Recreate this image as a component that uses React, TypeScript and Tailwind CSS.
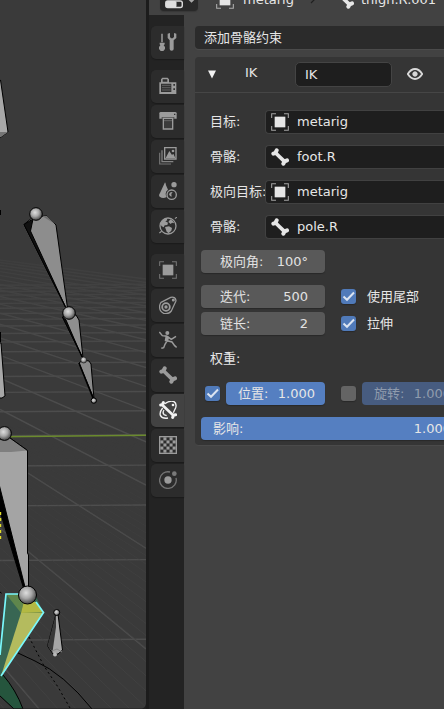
import React from "react";

type IconProps = { box?: string; className?: string; children?: React.ReactNode };

function Icon({ box = "0 0 54 54", className = "text-[#9b9b9b]", children }: IconProps) {
  return (
    <svg viewBox={box} className={`h-[18px] w-[18px] shrink-0 ${className}`} fill="none" stroke="currentColor">
      {children}
    </svg>
  );
}

function ObjectIcon({ className }: { className?: string }) {
  return (
    <Icon className={className}>
      <rect x="11" y="11" width="32" height="32" fill="currentColor" stroke="none" />
      <path d="M2 15V2h13M39 2h13v13M52 39v13H39M15 52H2V39" strokeWidth="3.2" opacity="0.65" />
    </Icon>
  );
}

function BoneIcon({ className }: { className?: string }) {
  return (
    <Icon className={className}>
      <path d="M14 15L40 40" strokeWidth="11" />
      <path d="M7 17L13 15L17 7M37 47L41 40L48 37" strokeWidth="12" strokeLinecap="round" strokeLinejoin="round" />
    </Icon>
  );
}

function ToolsIcon() {
  return (
    <Icon box="38 99 54 54">
      <path d="M47 101V127" strokeWidth="4.5" />
      <path d="M40 128h15v5l-3 3 4 5v6l-5 6h-8l-5-6v-6l4-5-2-3z" fill="currentColor" stroke="none" />
      <path d="M64 101v13l6 7v26q0 5 6 5t6-5v-26l8-7v-13l-7-2v12l-4 4h-5l-3-4v-12z" fill="currentColor" stroke="none" />
    </Icon>
  );
}

function RenderIcon() {
  return (
    <Icon box="38 231 54 54">
      <path d="M39 247h5v-9l4-5h16l4 5v9h22v35H39z" fill="currentColor" stroke="none" />
      <path d="M49 238h14v7H49zM44 251h31v25H44z" fill="#303030" stroke="none" />
      <path d="M47 256h26M47 263h26M47 270h26" strokeWidth="3" opacity="0.45" />
      <path d="M81 252h5v5h-5zM81 265h5v5h-5z" fill="#303030" stroke="none" />
    </Icon>
  );
}

function OutputIcon() {
  return (
    <Icon box="38 338 54 54">
      <path d="M39 342q0-4 4-4h43q5 0 5 4v16H39z" fill="currentColor" stroke="none" />
      <path d="M83 343h4v4h-4z" fill="#303030" stroke="none" />
      <path d="M46 354h38v4H46z" fill="#303030" stroke="none" />
      <path d="M51 357h28v32H51z" fill="#3b3b3b" strokeWidth="4" />
      <path d="M53 364h24" stroke="#666" strokeWidth="3" />
    </Icon>
  );
}

function ViewLayerIcon() {
  return (
    <Icon box="38 52 54 54">
      <path d="M55 54h34v34H55z" strokeWidth="4" />
      <path d="M58 85l11-21 8 12 4-4 6 13z" fill="currentColor" stroke="none" />
      <circle cx="80" cy="64" r="4" fill="currentColor" stroke="none" />
      <path d="M47 62v34h34" strokeWidth="3.8" opacity="0.8" />
      <path d="M40 69v34h34" strokeWidth="3.5" opacity="0.65" />
    </Icon>
  );
}

function SceneIcon() {
  return (
    <Icon box="38 157 54 54">
      <path d="M56 158q2 2 3 9l6 13q-7 5-7 12 0 6 3 10-11 7-21-1-4-4 1-11z" fill="currentColor" stroke="none" />
      <circle cx="83" cy="165" r="8" fill="currentColor" stroke="none" />
      <circle cx="76" cy="195" r="14" strokeWidth="4" />
      <path d="M68 194q2-8 11-7l-4 6 1 8q-6 0-8-7z" fill="currentColor" stroke="none" />
    </Icon>
  );
}

function WorldIcon() {
  return (
    <Icon box="38 262 54 54">
      <circle cx="65" cy="289" r="24" strokeWidth="3.8" />
      <path d="M43 280q6-12 18-14l2 6-6 3 8 4-2 7-8 1-3 6-7-4zM56 292l12-2 9 5-2 8-8 8-6-5zM72 269l7 4 5 8-7-2-4 4-7-6z" fill="currentColor" stroke="none" />
      <path d="M39 310l7-5M86 267l6-5" strokeWidth="3.5" />
    </Icon>
  );
}

function ModifierIcon() {
  return (
    <Icon box="38 139 54 54">
      <path d="M44 158L73 143q14-3 16 9 0 4-3 8L75 184q-9 11-23 7-14-6-12-23 1-6 4-10z" strokeWidth="3.8" />
      <circle cx="59" cy="172" r="11.5" strokeWidth="5.5" />
      <circle cx="59" cy="172" r="5" fill="currentColor" stroke="none" />
      <circle cx="81" cy="151" r="4.5" fill="currentColor" stroke="none" />
    </Icon>
  );
}

function RunnerIcon() {
  return (
    <Icon box="38 244 54 54">
      <circle cx="63" cy="250" r="6" fill="currentColor" stroke="none" />
      <path d="M39 247l9 11 14 2 13 9 14-9M61 276l-5 8-4 10-7 2M63 273l14 4 8 11 6 5" strokeWidth="4.5" />
      <path d="M58 257l11 6-5 14-9-3z" fill="currentColor" stroke="none" />
    </Icon>
  );
}

function BoneConstraintIcon() {
  return (
    <Icon box="38 124 54 54" className="text-[#f2f2f2]">
      <path d="M54 133q17-12 29-7 9 6 5 18l-7 15M49 145q-10 12-7 22 6 11 23 8" strokeWidth="4" />
      <circle cx="80" cy="136" r="4" fill="currentColor" stroke="none" />
      <path d="M53 151q-6 8 0 14l8 3" strokeWidth="3.5" />
      <path d="M48 136L82 168" strokeWidth="8" />
      <path d="M43 136l5-1 3-6M79 173l3-7 6-1" strokeWidth="9" strokeLinecap="round" />
    </Icon>
  );
}

const checkerCells = [0, 1, 2, 3, 4].flatMap((r) => [0, 1, 2, 3, 4].map((c) => [r, c])).filter(([r, c]) => (r + c) % 2 === 1);

function TextureIcon() {
  return (
    <Icon>
      <rect x="2" y="2" width="50" height="50" strokeWidth="4" />
      {checkerCells.map(([r, c]) => (
        <rect key={`${r}${c}`} x={4 + c * 9.2} y={4 + r * 9.2} width="9.2" height="9.2" fill="currentColor" stroke="none" />
      ))}
    </Icon>
  );
}

function PhysicsIcon() {
  return (
    <Icon box="38 334 54 54">
      <circle cx="65" cy="361" r="11" fill="currentColor" stroke="none" />
      <circle cx="84" cy="342" r="7" fill="currentColor" stroke="none" opacity="0.7" />
      <path d="M71 337A25 25 0 1 0 89 355" strokeWidth="4" opacity="0.65" />
    </Icon>
  );
}

function Tab({ active, children }: { active?: boolean; children: React.ReactNode }) {
  return (
    <div className={`flex h-[33px] items-center rounded-l-[5px] pb-px pl-[8px] shadow-[0_1px_1px_#1b1b1b] ${active ? "bg-[#424242]" : "bg-[#2c2c2c]"}`}>
      {children}
    </div>
  );
}

const depthLines = Array.from({ length: 22 }, (_, n) => 210 + 1 / (0.00233 + 0.00053 * n));
const raySlopes = Array.from({ length: 20 }, (_, n) => 1 / (0.85 + 0.36 * n));
const fineRays = Array.from({ length: 50 }, (_, n) => 1 / (0.6 + 0.036 * n));

function Viewport() {
  return (
    <svg viewBox="0 0 146 709" className="block h-[709px] w-[146px]">
      <defs>
        <linearGradient id="gridFade" x1="0" y1="0" x2="0" y2="709" gradientUnits="userSpaceOnUse">
          <stop offset="0.33" stopColor="#fff" stopOpacity="0" />
          <stop offset="0.46" stopColor="#fff" stopOpacity="0.7" />
          <stop offset="0.6" stopColor="#fff" stopOpacity="1" />
        </linearGradient>
        <linearGradient id="fineFade" x1="0" y1="0" x2="0" y2="709" gradientUnits="userSpaceOnUse">
          <stop offset="0.6" stopColor="#fff" stopOpacity="0" />
          <stop offset="0.9" stopColor="#fff" stopOpacity="1" />
        </linearGradient>
        <mask id="gridMask" maskUnits="userSpaceOnUse" x="0" y="0" width="146" height="709">
          <rect width="146" height="709" fill="url(#gridFade)" />
        </mask>
        <mask id="fineMask" maskUnits="userSpaceOnUse" x="0" y="0" width="146" height="709">
          <rect width="146" height="709" fill="url(#fineFade)" />
        </mask>
        <radialGradient id="ball" cx="0.42" cy="0.38" r="0.62">
          <stop offset="0" stopColor="#dedede" />
          <stop offset="0.5" stopColor="#a8a8a8" />
          <stop offset="1" stopColor="#484848" />
        </radialGradient>
      </defs>
      <rect width="146" height="709" fill="#3a3a3a" />
      <g mask="url(#gridMask)" stroke="#4e4e4e" strokeWidth="1.4">
        {depthLines.map((y) => (
          <line key={y} x1="0" y1={y + 0.9} x2="146" y2={y} />
        ))}
        {raySlopes.map((s) => (
          <line key={s} x1="0" y1={210 + 385 * s} x2="146" y2={210 + 531 * s} />
        ))}
      </g>
      <g mask="url(#fineMask)" stroke="#424242" strokeWidth="0.8">
        {fineRays.map((s) => (
          <line key={s} x1="0" y1={210 + 385 * s} x2="146" y2={210 + 531 * s} />
        ))}
      </g>
      <path d="M0 436.7L146 435.3" stroke="#6b8b2d" strokeWidth="1.4" />

      <g stroke="#000" strokeWidth="1" strokeLinejoin="round">
        <path d="M-2 78L0.5 80L8 132L1 137H-2z" fill="#a8a8a8" />
        <path d="M-1 132H8L1 137H-1z" fill="#747474" stroke="none" />
        <path d="M0 210v5M0 332v10" strokeWidth="2" />
        <path d="M-1 343H1L5 396L2 398H-1z" fill="#a8a8a8" />

        <path d="M24 224.5L33 217L47 216L56 225L67.5 308L65.5 307z" fill="#8d8d8d" />
        <path d="M24 224.5L33 219L30.5 231L65.5 307z" fill="#111" />
        <path d="M42 216H47L55 224z" fill="#707070" stroke="none" />
        <circle cx="36" cy="214" r="6.3" fill="url(#ball)" />
        <path d="M62.5 317L68 315L76 315L79 320L83 358z" fill="#8f8f8f" />
        <path d="M62.5 317L66 320L82 357z" fill="#111" />
        <circle cx="69" cy="313" r="6.3" fill="url(#ball)" />
        <path d="M79 363L83 360L89 361L91 364L94 399z" fill="#8b8b8b" />
        <path d="M79 363L93 398" strokeWidth="1.6" />
        <circle cx="83.7" cy="360" r="3" fill="url(#ball)" stroke="#222" strokeWidth="0.7" />
        <circle cx="93.8" cy="400.6" r="2.7" fill="url(#ball)" />

        <path d="M-1 440L10 438L27.5 450.5V553L28.5 555V592L25 591L-1 488z" fill="#a4a4a4" />
        <path d="M-1 440L10 438L27.5 450.5L11 452H-1z" fill="#7f7f7f" stroke="none" />
        <path d="M10 438L27.5 450.5" fill="none" />
        <path d="M-1 484L26 591L23.5 588L-1 508z" fill="#000" />
        <circle cx="4.5" cy="433.5" r="6.9" fill="url(#ball)" />
      </g>
      <path d="M0.5 512V540" stroke="#e3df28" strokeWidth="1.4" strokeDasharray="3 3" />

      <path d="M0 592L4 595M29 637L44 666L58 687L70 708" fill="none" stroke="#000" strokeDasharray="2 3" />
      <path d="M18 653L35 661Q64 674 92 709" fill="none" stroke="#000" />
      <path d="M-1 674L3 675Q16 690 23 709H14L-1 695z" fill="#25553d" stroke="#000" />
      <path d="M-1 655L6 594H35L43.5 613L1 676L-1 674z" fill="#386653" />
      <path d="M6 594H28L24 601L21 613z" fill="#5f864c" />
      <path d="M24 601L36 602L43.5 612.5L21 613z" fill="#b3b943" />
      <path d="M21 613H43.5L1 676z" fill="#b4bb5e" />
      <path d="M0 655L6 594H21M36 602L43.5 612.5L1 676" fill="none" stroke="#79f7fb" strokeWidth="1.7" />
      <circle cx="27.5" cy="595" r="9" fill="url(#ball)" stroke="#000" />
      <path d="M56 614L47.5 646L53 654H58L62.5 650L58 614z" fill="#a7a7a7" stroke="#000" />
      <path d="M56 614L47.5 646L52.5 652L56 627z" fill="#393939" />
      <path d="M52 651L57 649L62 652" fill="none" stroke="#888" />
      <circle cx="55" cy="654.5" r="2" fill="#b9b9b9" />
      <circle cx="56.7" cy="612.5" r="3" fill="url(#ball)" stroke="#000" />
      <path d="M0 708.5H142Q145 708 146 704V709H0z" fill="#202020" />
    </svg>
  );
}

function Field({ label, icon, value }: { label: string; icon: React.ReactNode; value: string }) {
  return (
    <div className="flex h-[24px]">
      <div className="w-[70px] shrink-0 whitespace-nowrap pl-[15px] leading-[23px]">{label}</div>
      <div className="flex h-full flex-1 items-center rounded-l-[4px] border border-r-0 border-[#414141] bg-[#1e1e1e] pb-px pl-[5px] leading-[22px]">
        {icon}
        <span className="pl-[8px]">{value}</span>
      </div>
    </div>
  );
}

function NumberField({ label, value }: { label: string; value: string }) {
  return (
    <div className="flex h-[23px] w-[124px] justify-between rounded-[4px] bg-[#595959] pl-[19px] pr-[17px] leading-[23px] text-[#e2e2e2] shadow-[0_1px_1px_#292929]">
      <span>{label}</span>
      <span>{value}</span>
    </div>
  );
}

function Check({ on = true }: { on?: boolean }) {
  return (
    <div className={`h-[15px] w-[15px] shrink-0 rounded-[3px] shadow-[0_1px_1px_#282828] ${on ? "bg-[#507ab9]" : "bg-[#646464]"}`}>
      {on && (
        <svg viewBox="0 0 15 15" className="block h-[15px] w-[15px]" fill="none" stroke="#dbe4f1" strokeWidth="2">
          <path d="M2.5 7.5L6 10.8L13 3.5" />
        </svg>
      )}
    </div>
  );
}

export default function App() {
  return (
    <div className="flex h-[709px] w-[444px] overflow-hidden bg-[#1c1c1c] font-['DejaVu_Sans','Noto_Sans_CJK_SC',sans-serif] text-[13px] text-[#e6e6e6]">
      <div className="w-[146px] shrink-0">
        <Viewport />
      </div>
      <div className="ml-[3px] flex w-[295px] shrink-0 flex-col overflow-hidden bg-[#424242]">
        <header className="h-[15px] shrink-0 overflow-hidden">
          <div className="-mt-[12px] flex h-[23px] items-center pl-[11px] leading-[23px]">
            <div className="flex h-[23px] w-[38px] shrink-0 items-end gap-[5px] rounded-[4px] bg-[#292929] pb-[2px] pl-[5px] shadow-[0_1px_1px_#383838]">
              <svg viewBox="0 0 18 14" className="h-[14px] w-[18px]">
                <rect x="0.8" y="6" width="16.5" height="6.5" rx="2" fill="#292929" stroke="#d8d8d8" strokeWidth="1.5" />
                <rect x="1" y="6" width="10.5" height="6.5" rx="1.5" fill="#dedede" />
              </svg>
              <svg viewBox="0 0 7 12" className="h-[12px] w-[7px]" fill="none" stroke="#aaa" strokeWidth="1.8">
                <path d="M0.5 1.5L3.5 4.5L6.5 1.5" />
              </svg>
            </div>
            <div className="ml-[18px] flex w-[77px] shrink-0 items-center gap-[9px]">
              <ObjectIcon className="text-[#e6e6e6]" />
              <span>metarig</span>
            </div>
            <svg viewBox="0 0 6 12" className="ml-[17px] h-[12px] w-[6px] shrink-0" fill="none" stroke="#202020" strokeWidth="1.2">
              <path d="M1 1L5 5L1 9" />
            </svg>
            <div className="ml-[20px] flex items-center gap-[7px]">
              <BoneIcon className="text-[#e6e6e6]" />
              <span>thigh.R.001</span>
            </div>
          </div>
        </header>
        <div className="flex flex-1">
          <nav className="flex w-[35px] shrink-0 flex-col gap-[2px] bg-[#232323] pl-[2px] pt-[11px]">
            <Tab><ToolsIcon /></Tab>
            <div className="h-[7px]" />
            <Tab><RenderIcon /></Tab>
            <Tab><OutputIcon /></Tab>
            <Tab><ViewLayerIcon /></Tab>
            <Tab><SceneIcon /></Tab>
            <Tab><WorldIcon /></Tab>
            <div className="h-[7px]" />
            <Tab><ObjectIcon className="text-[#9b9b9b]" /></Tab>
            <Tab><ModifierIcon /></Tab>
            <Tab><RunnerIcon /></Tab>
            <Tab><BoneIcon className="text-[#9b9b9b]" /></Tab>
            <Tab active><BoneConstraintIcon /></Tab>
            <Tab><TextureIcon /></Tab>
            <Tab><PhysicsIcon /></Tab>
          </nav>
          <main className="flex-1 pl-[11px] pt-[11px]">
            <div className="h-[23px] rounded-l-[4px] bg-[#2b2b2b] pl-[9px] leading-[23px] shadow-[0_1px_1px_#4d4d4d]">添加骨骼约束</div>
            <section className="mt-[8px] h-[389px] rounded-l-[4px] border-b border-[#4a4a4a] bg-[#353535]">
              <div className="flex h-[36px] items-center border-b border-[#464646]">
                <svg viewBox="0 0 8 9" className="ml-[13px] h-[9px] w-[8px]">
                  <path d="M0 0.5H8L4 8.5z" fill="#f2f2f2" />
                </svg>
                <span className="ml-[29px] w-[50px] pb-[4px] leading-[23px]">IK</span>
                <div className="h-[25px] w-[97px] rounded-[5px] border border-[#444] bg-[#1e1e1e] pl-[9px] leading-[23px]">IK</div>
                <svg viewBox="0 0 16 12" className="mb-px ml-[15px] h-[12px] w-[16px]" fill="none" stroke="#d9d9d9">
                  <path d="M0.8 6Q4 1 8 1T15.2 6Q12 11 8 11T0.8 6z" strokeWidth="1.9" />
                  <circle cx="8" cy="6" r="2.2" fill="#d9d9d9" strokeWidth="1" />
                </svg>
              </div>
              <div className="flex flex-col gap-[11px] pt-[17px]">
                <Field label="目标:" icon={<ObjectIcon className="text-[#e6e6e6]" />} value="metarig" />
                <Field label="骨骼:" icon={<BoneIcon className="text-[#e6e6e6]" />} value="foot.R" />
                <Field label="极向目标:" icon={<ObjectIcon className="text-[#e6e6e6]" />} value="metarig" />
                <Field label="骨骼:" icon={<BoneIcon className="text-[#e6e6e6]" />} value="pole.R" />
              </div>
              <div className="pl-[6px] pt-[11px]">
                <NumberField label="极向角:" value="100°" />
                <div className="mt-[12px] flex flex-col gap-[4px]">
                  <div className="flex items-center">
                    <NumberField label="迭代:" value="500" />
                    <div className="ml-[16px] flex items-center gap-[11px]"><Check /><span className="leading-[23px]">使用尾部</span></div>
                  </div>
                  <div className="flex items-center">
                    <NumberField label="链长:" value="2" />
                    <div className="ml-[16px] flex items-center gap-[11px]"><Check /><span className="leading-[23px]">拉伸</span></div>
                  </div>
                </div>
                <div className="mt-[12px] pl-[9px] leading-[23px]">权重:</div>
                <div className="mt-[12px] flex h-[23px] items-center leading-[23px]">
                  <div className="ml-[4px]"><Check /></div>
                  <div className="ml-[6px] flex w-[99px] shrink-0 justify-between rounded-[4px] bg-[#557fc1] pl-[12px] pr-[10px] shadow-[0_1px_1px_#292929]">
                    <span>位置:</span><span>1.000</span>
                  </div>
                  <div className="ml-[16px]"><Check on={false} /></div>
                  <div className="ml-[6px] flex w-[99px] shrink-0 justify-between rounded-l-[4px] bg-[#475c80] pl-[12px] pr-[10px] text-[#8f9bad]">
                    <span>旋转:</span><span>1.000</span>
                  </div>
                </div>
                <div className="mt-[12px] flex h-[23px] w-[260px] justify-between rounded-l-[4px] bg-[#557fc1] pl-[12px] pr-[10px] leading-[23px] shadow-[0_1px_1px_#292929]">
                  <span>影响:</span><span>1.000</span>
                </div>
              </div>
            </section>
          </main>
        </div>
      </div>
    </div>
  );
}
